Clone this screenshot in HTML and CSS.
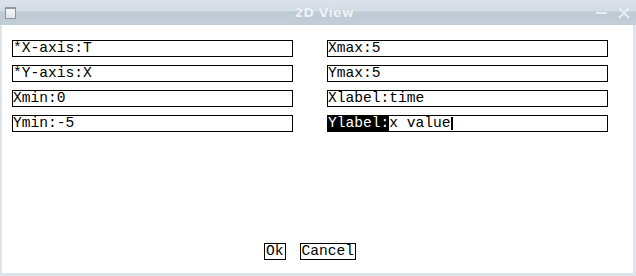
FILE: index.html
```html
<!DOCTYPE html>
<html>
<head>
<meta charset="utf-8">
<link rel="stylesheet" href="styles.css">
</head>
<body>
<div class="window">
  <div class="titlebar">
    <div class="winicon"></div>
    <div class="title">2D View</div>
    <div class="controls">
      <span class="min"></span>
      <svg class="close" width="12" height="12" viewBox="0 0 12 12"><path d="M1 1 L11 11 M11 1 L1 11" stroke="#e9eef2" stroke-width="2"/></svg>
    </div>
  </div>
  <div class="content">
    <div class="form">
      <div class="field">*X-axis:T</div>
      <div class="field">Xmax:5</div>
      <div class="field">*Y-axis:X</div>
      <div class="field">Ymax:5</div>
      <div class="field">Xmin:0</div>
      <div class="field">Xlabel:time</div>
      <div class="field">Ymin:-5</div>
      <div class="field"><span class="sel">Ylabel:</span>x value<span class="cursor"></span></div>
    </div>
    <div class="buttons">
      <div class="btn">Ok</div>
      <div class="btn">Cancel</div>
    </div>
  </div>
</div>
</body>
</html>
```

FILE: styles.css
```css
html, body {
  margin: 0;
  padding: 0;
  background: #dde3ea;
}
.window {
  width: 636px;
  height: 276px;
  display: flex;
  flex-direction: column;
  background: #dde3ea;
}
.titlebar {
  height: 25px;
  flex: none;
  display: flex;
  align-items: center;
  background: linear-gradient(to bottom, #dbe2ea 0px, #d3dbe4 11px, #bdc9d4 12px, #c3ced8 25px);
}
.winicon {
  width: 9px;
  height: 9px;
  margin-left: 5px;
  margin-top: 1px;
  border: 1px solid #8b96a2;
  border-top-width: 2px;
  background: linear-gradient(#f4f6f8, #dfe4e9);
}
.title {
  flex: 1;
  text-align: center;
  font-family: "DejaVu Sans", sans-serif;
  font-weight: bold;
  font-size: 13px;
  color: #eef2f6;
  padding-left: 36px;
  text-shadow: 0 0 1px rgba(150,165,180,0.5);
}
.controls {
  display: flex;
  align-items: center;
  gap: 11px;
  margin-right: 6px;
}
.min {
  width: 11px;
  height: 2px;
  background: #e9eef2;
  margin-top: 1px;
}
.close {
  display: block;
}
.content {
  flex: none;
  height: 248px;
  margin: 0 3px 0 2px;
  background: #fff;
  display: flex;
  flex-direction: column;
  padding-top: 15px;
  box-sizing: border-box;
}
.form {
  display: grid;
  grid-template-columns: 281px 281px;
  column-gap: 34px;
  row-gap: 8px;
  padding-left: 10px;
}
.field {
  height: 17px;
  box-sizing: border-box;
  border: 1px solid #000;
  font-family: "Liberation Mono", monospace;
  font-size: 14.6px;
  line-height: 15px;
  color: #000;
  white-space: pre;
  display: flex;
  align-items: center;
}
.sel {
  background: #000;
  color: #fff;
  height: 15px;
  line-height: 15px;
}
.cursor {
  width: 2px;
  height: 13px;
  background: #000;
}
.buttons {
  margin-top: auto;
  margin-bottom: 13px;
  display: flex;
  gap: 14px;
  padding-left: 262px;
}
.btn {
  height: 17px;
  box-sizing: border-box;
  border: 1px solid #000;
  font-family: "Liberation Mono", monospace;
  font-size: 14.6px;
  line-height: 15px;
  padding: 0 1px;
  color: #000;
}
```
